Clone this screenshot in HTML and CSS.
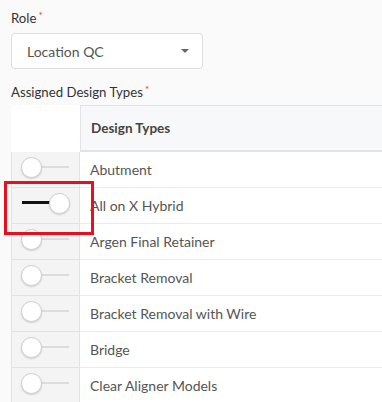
FILE: index.html
```html
<!DOCTYPE html>
<html lang="en">
<head>
    <meta charset="UTF-8">
    <title>Role</title>
    <link rel="stylesheet" href="styles.css">
</head>
<body>
<div class="form">
    <div class="label">Role<span class="req">*</span></div>
    <div class="select">
        <span>Location QC</span>
        <i class="caret"></i>
    </div>
    <div class="label label-types">Assigned Design Types<span class="req">*</span></div>
    <div class="table">
        <div class="head">
            <div class="cell-toggle"></div>
            <div class="cell-name">Design Types</div>
        </div>
        <div class="row">
            <div class="cell-toggle"><span class="switch"></span></div>
            <div class="cell-name">Abutment</div>
        </div>
        <div class="row">
            <div class="cell-toggle mark"><span class="switch on"></span></div>
            <div class="cell-name">All on X Hybrid</div>
        </div>
        <div class="row">
            <div class="cell-toggle"><span class="switch"></span></div>
            <div class="cell-name">Argen Final Retainer</div>
        </div>
        <div class="row">
            <div class="cell-toggle"><span class="switch"></span></div>
            <div class="cell-name">Bracket Removal</div>
        </div>
        <div class="row">
            <div class="cell-toggle"><span class="switch"></span></div>
            <div class="cell-name">Bracket Removal with Wire</div>
        </div>
        <div class="row">
            <div class="cell-toggle"><span class="switch"></span></div>
            <div class="cell-name">Bridge</div>
        </div>
        <div class="row">
            <div class="cell-toggle"><span class="switch"></span></div>
            <div class="cell-name">Clear Aligner Models</div>
        </div>
    </div>
</div>
</body>
</html>
```

FILE: styles.css
```css
*{
    margin: 0;
    padding: 0;
    box-sizing: border-box;
}
body{
    background-color: #fafafa;
    font-family: Lato, "Liberation Sans", sans-serif;
    font-size: 13px;
    color: #555;
    overflow: hidden;
}
.form{
    padding: 10px 0 0 11px;
}
.label{
    line-height: 16px;
    color: #333;
    font-size: 13.2px;
}
.label .req{
    color: #e53935;
    font-size: 10px;
    vertical-align: top;
    margin-left: 2px;
    line-height: 10px;
}
.select{
    margin-top: 7px;
    width: 192px;
    height: 36px;
    background-color: #fff;
    border: 1px solid #dedede;
    border-radius: 4px;
    display: flex;
    align-items: center;
    justify-content: space-between;
    padding: 0 13px 0 15px;
    font-size: 14px;
    color: #555;
}
.select .caret{
    width: 0;
    height: 0;
    border-left: 4px solid transparent;
    border-right: 4px solid transparent;
    border-top: 4px solid #666;
}
.label-types{
    margin-top: 15px;
}
.table{
    margin-top: 5px;
    width: 420px;
}
.head, .row{
    display: flex;
}
.head{
    height: 47px;
}
.row{
    height: 36px;
}
.cell-toggle{
    width: 69px;
    flex: none;
    position: relative;
}
.cell-name{
    flex: 1;
    display: flex;
    align-items: center;
    padding-left: 10px;
    font-size: 14px;
}
.head .cell-toggle{
    background-color: #fff;
    border-top-left-radius: 5px;
}
.head .cell-name{
    background-color: #f7f8fa;
    border-top: 1px solid #e2e3e6;
    border-left: 1px solid #e2e3e6;
    border-bottom: 2px solid #e2e3e6;
    font-weight: bold;
    font-size: 13.5px;
    color: #444;
}
.row .cell-toggle{
    background-color: #f4f4f4;
    border-left: 1px solid #e2e2e2;
    border-right: 1px solid #e2e2e2;
    border-bottom: 1px solid #e2e2e2;
}
.row .cell-name{
    background-color: #fff;
    border-bottom: 1px solid #ebebeb;
}
.switch{
    position: absolute;
    left: 9px;
    top: 5px;
    width: 48px;
    height: 20px;
}
.switch:before{
    content: "";
    position: absolute;
    left: 10px;
    right: 0;
    top: 9px;
    height: 2px;
    background-color: #dcdcdc;
}
.switch:after{
    content: "";
    position: absolute;
    left: 0;
    top: 0;
    width: 19px;
    height: 19px;
    border-radius: 50%;
    background-color: #fff;
    border: 1px solid #cfcfcf;
    box-shadow: 0 1px 2px rgba(0,0,0,0.15);
}
.switch.on:before{
    left: 1px;
    right: 10px;
    top: 8px;
    height: 3px;
    background-color: #111;
}
.switch.on:after{
    left: 28px;
}
.mark:after{
    content: "";
    position: absolute;
    left: -8px;
    top: -7px;
    width: 84px;
    height: 48px;
    border: 3px solid #e8101e;
    z-index: 2;
}
```
